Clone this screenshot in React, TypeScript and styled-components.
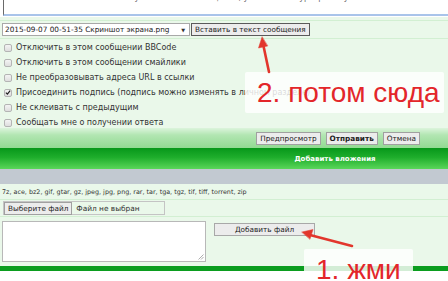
import * as React from "react";
import styled, { createGlobalStyle } from "styled-components";

const GlobalStyle = createGlobalStyle`
  html, body {
    margin: 0;
    padding: 0;
    background: #ffffff;
  }
  body {
    font-family: "DejaVu Sans", Verdana, sans-serif;
    overflow: hidden;
  }
`;

const Page = styled.div`
  position: relative;
  width: 448px;
  height: 281px;
  overflow: hidden;
  background: #ffffff;
`;

const TopCell = styled.div`
  height: 17px;
  background: #ffffff;
  padding-left: 3px;
  overflow: hidden;
`;

const MessageBox = styled.div`
  height: 14px;
  border-left: 1px solid #6a6a6a;
  border-bottom: 2px solid #a9c4ea;
  overflow: hidden;
  font-size: 8px;
  line-height: 10px;
  color: #6a6a6a;
  white-space: nowrap;
  padding-left: 4px;
  & > span {
    display: block;
    margin-top: -7px;
  }
`;

const Body = styled.div`
  background: #eaf8ea;
`;

const Row = styled.div<{ $h: number; $line?: boolean }>`
  height: ${(p) => p.$h}px;
  box-sizing: border-box;
  border-bottom: ${(p) => (p.$line ? "1px solid #d2efd2" : "none")};
  display: flex;
  align-items: center;
  padding-left: 2px;
  gap: 1px;
`;

const Select = styled.div`
  width: 188px;
  height: 13px;
  box-sizing: border-box;
  border: 1px solid #a8a8a8;
  background: #fff;
  display: flex;
  align-items: center;
  justify-content: space-between;
  padding: 0 4px 0 2px;
  font-size: 7.3px;
  color: #222;
  white-space: nowrap;
`;

const Caret = styled.span`
  font-size: 5px;
  color: #333;
`;

const Button = styled.button<{ $bold?: boolean; $dark?: boolean }>`
  height: 13px;
  box-sizing: border-box;
  padding: 0 3px;
  margin: 0;
  border: 1px solid ${(p) => (p.$dark ? "#5a5a5a" : "#a0a0a0")};
  background: #ececec;
  font-family: "DejaVu Sans", Verdana, sans-serif;
  font-size: 7.3px;
  font-weight: ${(p) => (p.$bold ? 700 : 400)};
  color: #222;
  line-height: 11px;
  white-space: nowrap;
`;

const Options = styled.div`
  padding-top: 1px;
  height: 89px;
  box-sizing: border-box;
`;

const Option = styled.label`
  height: 15px;
  display: flex;
  align-items: center;
  padding-left: 4px;
  gap: 4px;
  font-size: 8px;
  color: #333;
  white-space: nowrap;
`;

const Box = styled.span`
  width: 8px;
  height: 8px;
  box-sizing: border-box;
  border: 1px solid #b4b4b4;
  border-radius: 2px;
  background: linear-gradient(#f4f4f4, #dedede);
  display: flex;
  align-items: center;
  justify-content: center;
`;

const ActionBar = styled.div`
  height: 20px;
  background: linear-gradient(#dcf4dc 0%, #b2e6b2 35%, #92da92 100%);
  display: flex;
  align-items: center;
  justify-content: flex-end;
  gap: 5px;
  padding-right: 28px;
  padding-top: 1px;
  box-sizing: border-box;
`;

const Header = styled.div`
  height: 21px;
  background: linear-gradient(#07971a 0%, #1fae2c 45%, #5ad65a 100%);
  color: #ffffff;
  font-size: 7px;
  font-weight: 700;
  display: flex;
  align-items: center;
  justify-content: center;
  padding-left: 222px;
  box-sizing: border-box;
`;

const GreyBar = styled.div`
  height: 15px;
  background: #c2c9d1;
`;

const ExtText = styled.span`
  font-size: 6.4px;
  color: #333;
  white-space: nowrap;
`;

const FileInput = styled.div`
  width: 162px;
  height: 14px;
  box-sizing: border-box;
  border: 1px solid #c4c4c4;
  display: flex;
  align-items: center;
  gap: 4px;
  margin-left: 1px;
  font-size: 7.4px;
  color: #333;
  white-space: nowrap;
`;

const AttachRow = styled.div`
  height: 49px;
  display: flex;
  align-items: flex-start;
  padding: 4px 0 0 2px;
  box-sizing: border-box;
  gap: 8px;
`;

const Comment = styled.div`
  position: relative;
  width: 204px;
  height: 41px;
  box-sizing: border-box;
  border: 1px solid #b8b8b8;
  background: #ffffff;
`;

const Grip = styled.svg`
  position: absolute;
  right: 1px;
  bottom: 1px;
`;

const AddButton = styled(Button)`
  margin-top: 2px;
  width: 101px;
  border-color: #a8a8a8;
`;

const GreenLine = styled.div`
  height: 5px;
  background: #0b9d1f;
`;

const Callout = styled.div<{ $x: number; $y: number; $w: number; $h: number }>`
  position: absolute;
  left: ${(p) => p.$x}px;
  top: ${(p) => p.$y}px;
  width: ${(p) => p.$w}px;
  height: ${(p) => p.$h}px;
  background: rgba(255, 255, 255, 0.82);
  border-radius: 2px;
  color: #e3262a;
  font-family: "Liberation Sans", Arial, sans-serif;
  font-size: 28px;
  line-height: 1;
  padding: 7px 0 0 12px;
  box-sizing: border-box;
  white-space: nowrap;
`;

const Arrows = styled.svg`
  position: absolute;
  left: 0;
  top: 0;
  pointer-events: none;
`;

const options = [
  { label: "Отключить в этом сообщении BBCode", checked: false },
  { label: "Отключить в этом сообщении смайлики", checked: false },
  { label: "Не преобразовывать адреса URL в ссылки", checked: false },
  {
    label: "Присоединить подпись (подпись можно изменять в личном разделе)",
    checked: true,
  },
  { label: "Не склеивать с предыдущим", checked: false },
  { label: "Сообщать мне о получении ответа", checked: false },
];

const App = () => {
  return (
    <Page>
      <GlobalStyle />
      <TopCell>
        <MessageBox>
          <span>
            Чтобы вставить вложение в нужное место сообщения, установите курсор на нужное место и нажмите
            «Вставить в текст сообщения»
          </span>
        </MessageBox>
      </TopCell>
      <Body>
        <Row $h={4} $line />
        <Row $h={18} $line>
          <Select>
            <span>2015-09-07 00-51-35 Скриншот экрана.png</span>
            <Caret>▼</Caret>
          </Select>
          <Button $dark>Вставить в текст сообщения</Button>
        </Row>
        <Options>
          {options.map((o) => (
            <Option key={o.label}>
              <Box>
                {o.checked && (
                  <svg width="7" height="7" viewBox="0 0 7 7">
                    <path d="M1 3.6 L2.8 5.4 L6 1.3" stroke="#222" strokeWidth="1.4" fill="none" />
                  </svg>
                )}
              </Box>
              {o.label}
            </Option>
          ))}
        </Options>
        <ActionBar>
          <Button>Предпросмотр</Button>
          <Button $bold>Отправить</Button>
          <Button>Отмена</Button>
        </ActionBar>
        <Header>Добавить вложения</Header>
        <GreyBar />
        <Row $h={16} $line>
          <ExtText>
            7z, ace, bz2, gif, gtar, gz, jpeg, jpg, png, rar, tar, tga, tgz, tif, tiff, torrent, zip
          </ExtText>
        </Row>
        <Row $h={17} $line>
          <FileInput>
            <Button>Выберите файл</Button>
            <span>Файл не выбран</span>
          </FileInput>
        </Row>
        <AttachRow>
          <Comment>
            <Grip width="6" height="6" viewBox="0 0 6 6">
              <path d="M5.5 0.5 L0.5 5.5 M5.5 3 L3 5.5" stroke="#999" strokeWidth="0.8" />
            </Grip>
          </Comment>
          <AddButton>Добавить файл</AddButton>
        </AttachRow>
        <GreenLine />
      </Body>
      <Callout $x={245} $y={72} $w={199} $h={41}>
        2. потом сюда
      </Callout>
      <Callout $x={304} $y={249} $w={109} $h={40}>
        1. жми
      </Callout>
      <Arrows width="448" height="281" viewBox="0 0 448 281">
        <g fill="#e2362c" stroke="#e2362c" strokeLinecap="round">
          <line x1="269" y1="72" x2="263.5" y2="46" strokeWidth="2.6" />
          <polygon points="262,37 258.5,48 267.5,46" strokeWidth="0.5" />
          <line x1="352" y1="246" x2="310" y2="235" strokeWidth="2.6" />
          <polygon points="302,232 313,229.5 310,239" strokeWidth="0.5" />
        </g>
      </Arrows>
    </Page>
  );
};

export default App;
